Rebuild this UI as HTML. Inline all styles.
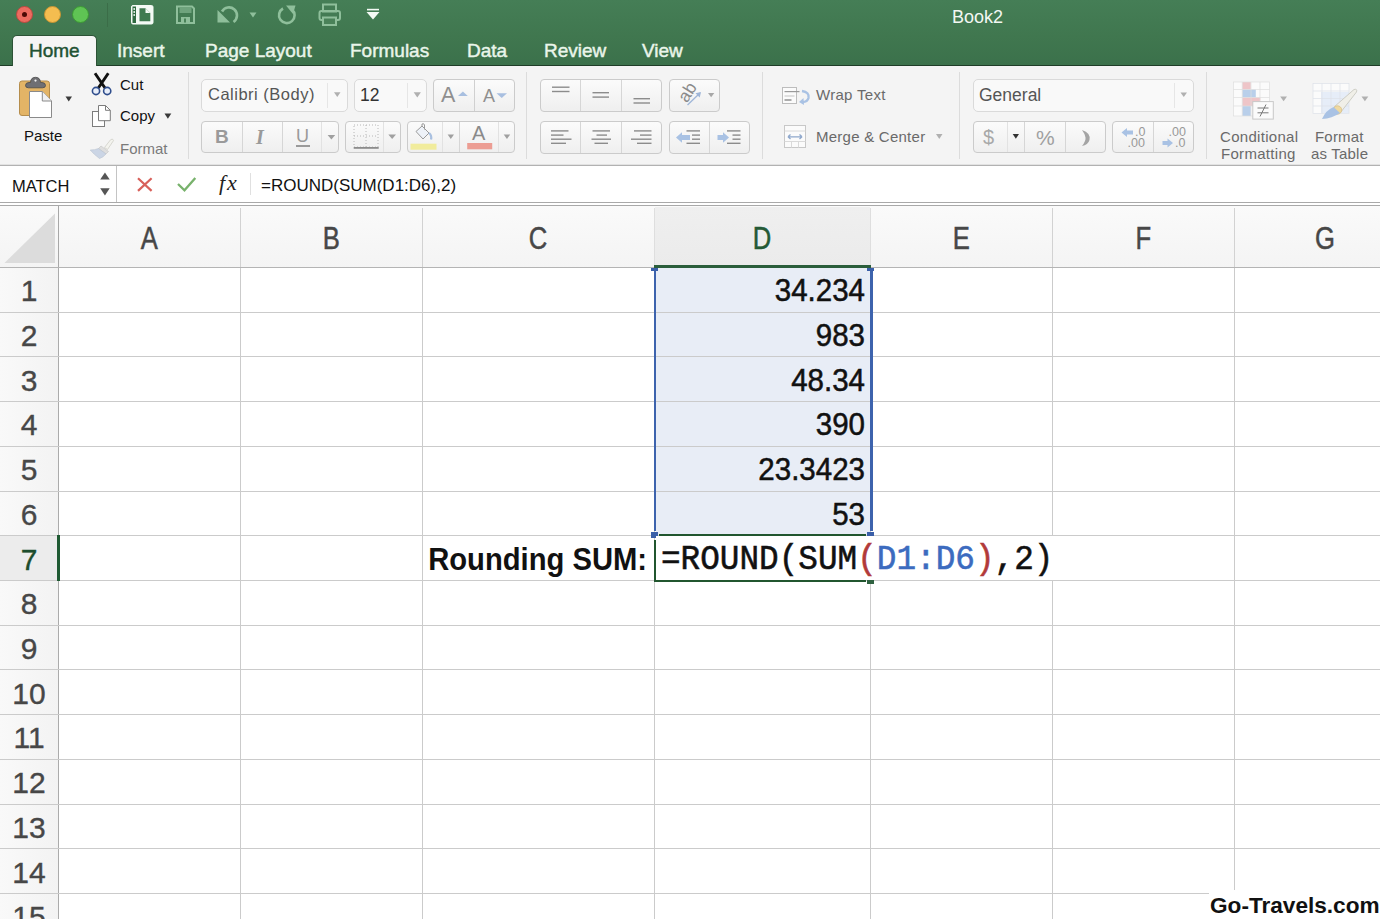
<!DOCTYPE html>
<html><head><meta charset="utf-8">
<style>
*{margin:0;padding:0;box-sizing:border-box}
html,body{width:1380px;height:919px;overflow:hidden;background:#fff;font-family:"Liberation Sans",sans-serif}
.a{position:absolute}
.t{position:absolute;white-space:nowrap;line-height:1}
#title{left:0;top:0;width:1380px;height:66px;background:linear-gradient(#457e56,#40774f 55%,#3b714b)}
#ribbon{left:0;top:66px;width:1380px;height:98px;background:#f4f4f4}
#fbar{left:0;top:164px;width:1380px;height:42px;background:#fff}
#colhdr{left:0;top:205px;width:1380px;height:62px;background:#f6f6f6}
#rowhdr{left:0;top:267px;width:58px;height:652px;background:#f6f6f6}
.hl{position:absolute;height:1px;background:#d6d6d6}
.vl{position:absolute;width:1px;background:#d6d6d6}
.tab{color:#eaf5ea;font-size:19px}
.box{position:absolute;border:1px solid #cbcbcb;border-radius:4px;background:linear-gradient(#fbfbfb,#efefef)}
.dv{position:absolute;width:1px;background:#d6d6d6}
.rt{font-size:15px;color:#111}
.gt{font-size:15px;color:#7a7a7a}
.ch{font-size:30.5px;color:#444;text-align:center;-webkit-text-stroke:0.5px currentColor}
.rn{font-size:30px;color:#444;text-align:center;width:58px;left:0;-webkit-text-stroke:0.35px currentColor}
.num{font-size:29.5px;color:#111;text-align:right;-webkit-text-stroke:0.5px currentColor;transform:scaleY(1.05);transform-origin:0 25px}
.mono{-webkit-text-stroke:0.55px currentColor;transform:scaleY(1.07);transform-origin:0 25px}
.tab{-webkit-text-stroke:0.45px currentColor}

</style></head><body>
<!-- TITLE BAR -->
<div id="title" class="a"></div>
<div class="a" style="left:0;top:65px;width:1380px;height:1px;background:#1f3d28"></div>
<!-- traffic lights -->
<div class="a" style="left:16px;top:6px;width:17px;height:17px;border-radius:50%;background:#ec6b60;border:1.2px solid #b9483f"></div>
<div class="a" style="left:22px;top:12px;width:5px;height:5px;border-radius:50%;background:#4d0a06"></div>
<div class="a" style="left:44px;top:6px;width:17px;height:17px;border-radius:50%;background:#f4bd50;border:1.2px solid #c89432"></div>
<div class="a" style="left:72px;top:6px;width:17px;height:17px;border-radius:50%;background:#5fc454;border:1.2px solid #3c9a34"></div>
<div class="a" style="left:107px;top:3px;width:1px;height:24px;background:#3b6d48"></div>
<!-- title icons -->
<svg class="a" style="left:0;top:0" width="400" height="32">
 <g>
  <rect x="131.5" y="5.5" width="21.5" height="18.5" rx="1.5" fill="#f4faf5" stroke="#f4faf5"/>
  <rect x="132.5" y="6.5" width="3.5" height="16.5" fill="#2f6b41"/>
  <circle cx="134.2" cy="9" r="0.9" fill="#f4faf5"/><circle cx="134.2" cy="12" r="0.9" fill="#f4faf5"/><circle cx="134.2" cy="15" r="0.9" fill="#f4faf5"/>
  <path d="M139.5 8.3 H145.5 L150.3 13 V21.3 H139.5 Z" fill="#3f7a50"/>
  <path d="M145.5 8.3 V13 H150.3" fill="#f4faf5"/>
 </g>
 <g fill="none" stroke="#8fbf9b" stroke-width="2">
  <path d="M177 6.5 H192 L194 8.5 V23 H177 Z"/>
  <rect x="179.5" y="7" width="12" height="6" fill="#6fa37d" stroke="none"/>
  <rect x="181" y="17" width="9" height="6" fill="#8fbf9b" stroke="none"/>
 </g>
 <rect x="184" y="18.5" width="2" height="4" fill="#4a8259"/>
 <g fill="none" stroke="#8fbf9b" stroke-width="2.6">
  <path d="M222 11.5 A8 8 0 1 1 233.5 22"/>
 </g>
 <path d="M217.5 10 L217.5 22.5 L230 22.5 Z" fill="#8fbf9b"/>
 <path d="M249.5 12.5 H256.5 L253 17.5 Z" fill="#8fbf9b"/>
 <g fill="none" stroke="#8fbf9b" stroke-width="2.6">
  <path d="M292 9.5 A7.8 7.8 0 1 1 283 8.5"/>
 </g>
 <path d="M286 5.5 L295.5 5.5 L293 14 Z" fill="#8fbf9b"/>
 <g fill="none" stroke="#8fbf9b" stroke-width="2">
  <rect x="323" y="4.5" width="13" height="7"/>
  <rect x="319.5" y="11" width="20.5" height="9" rx="2"/>
  <rect x="323" y="17.5" width="13" height="7.5" fill="#4a8259"/>
 </g>
 <rect x="367" y="8.8" width="12" height="1.6" fill="#f4faf5"/>
 <path d="M366.5 12 H379.5 L373 19.6 Z" fill="#f4faf5"/>
</svg>
<!-- Book2 -->
<div class="t" style="left:952px;top:8px;font-size:18px;color:#f2f7f2">Book2</div>
<!-- tabs -->
<div class="a" style="left:12px;top:35px;width:85px;height:31px;background:#f5f5f5;border:1px solid #2c5236;border-bottom:none;border-radius:5px 5px 0 0"></div>
<div class="t tab" style="left:29px;top:41px;color:#1f5233">Home</div>
<div class="t tab" style="left:117px;top:41px">Insert</div>
<div class="t tab" style="left:205px;top:41px">Page Layout</div>
<div class="t tab" style="left:350px;top:41px">Formulas</div>
<div class="t tab" style="left:467px;top:41px">Data</div>
<div class="t tab" style="left:544px;top:41px">Review</div>
<div class="t tab" style="left:642px;top:41px">View</div>

<!-- RIBBON -->
<div id="ribbon" class="a"></div>
<div class="a" style="left:0;top:164px;width:1380px;height:1px;background:#e2e2e2"></div><div class="a" style="left:0;top:165px;width:1380px;height:1px;background:#b2b2b2"></div>

<!-- clipboard group -->
<svg class="a" style="left:0;top:66px" width="200" height="98" viewBox="0 66 200 98">
 <rect x="19.5" y="81" width="30" height="34.5" rx="2.5" fill="#e3b466" stroke="#b58d4c" stroke-width="1"/>
 <path d="M25.5 85.5 Q25.5 82.5 29 82.5 H30.5 Q30.8 77.3 35.5 77.3 Q40.2 77.3 40.5 82.5 H42 Q45.5 82.5 45.5 85.5 Q45.5 87.8 42.5 87.8 H28.5 Q25.5 87.8 25.5 85.5 Z" fill="#6f6f73" stroke="#4a4a4a" stroke-width="0.8"/>
 <circle cx="35.5" cy="80.6" r="1.1" fill="#f4f4f4"/>
 <path d="M29.5 91.5 H42.3 L51.5 101 V117.5 H29.5 Z" fill="#fff" stroke="#8a8a8a" stroke-width="1"/>
 <path d="M42.3 91.5 V101 H51.5" fill="#f0f0f0" stroke="#8a8a8a" stroke-width="1"/>
 <path d="M65.5 96.5 H72 L68.75 101.5 Z" fill="#3a3a3a"/>
 <!-- scissors -->
 <path d="M95 73.2 L105 88 M108.3 73.2 L98.3 88" stroke="#111" stroke-width="2.9"/>
 <circle cx="96" cy="91" r="3.6" fill="#e8eef9" stroke="#2f4d8c" stroke-width="1.6"/>
 <circle cx="107.2" cy="91" r="3.6" fill="#e8eef9" stroke="#2f4d8c" stroke-width="1.6"/>
 <!-- copy -->
 <rect x="92.5" y="111.5" width="12" height="15" fill="#fff" stroke="#7c7c7c" stroke-width="1"/>
 <path d="M98.5 105.5 H105.5 L110.3 110.3 V120.7 H98.5 Z" fill="#fff" stroke="#7c7c7c" stroke-width="1"/>
 <path d="M105.5 105.5 V110.3 H110.3" fill="none" stroke="#7c7c7c" stroke-width="1"/>
 <path d="M164.5 113.5 H171.3 L167.9 118.7 Z" fill="#3a3a3a"/>
 <!-- brush -->
 <path d="M104.5 147.5 L110.5 139.8 Q112.8 137.8 113.5 140.6 L107.5 149.5 Z" fill="#f3f3ee" stroke="#cfcfc8" stroke-width="0.8"/>
 <path d="M101 146 L108.5 151.5 L106 154 L98.5 148.5 Z" fill="#dedede" stroke="#c4c4c4" stroke-width="0.6"/>
 <path d="M98.5 148.5 L106 154 Q103 157.5 99.5 158.5 Q94 154.5 90.2 150 Q95 150 98.5 148.5 Z" fill="#cbd5e5" stroke="#b9c2d0" stroke-width="0.6"/>
 <rect x="188" y="72" width="1" height="87" fill="#dcdcdc"/>
</svg>
<div class="t rt" style="left:24px;top:128px">Paste</div>
<div class="t rt" style="left:120px;top:77px">Cut</div>
<div class="t rt" style="left:120px;top:108px">Copy</div>
<div class="t gt" style="left:120px;top:141px">Format</div>
<!-- font group -->
<div class="a" style="left:201px;top:79px;width:147px;height:33px;border:1px solid #dadada;border-radius:5px;background:#f9f9f9"></div>
<div class="dv" style="left:327px;top:83px;height:25px;background:#e6e6e6"></div>
<div class="t" style="left:208px;top:86px;font-size:16.5px;letter-spacing:0.5px;color:#555">Calibri (Body)</div>
<div class="a" style="left:354px;top:79px;width:73px;height:33px;border:1px solid #dadada;border-radius:5px;background:#f9f9f9"></div>
<div class="dv" style="left:407px;top:83px;height:25px;background:#e6e6e6"></div>
<div class="t" style="left:360px;top:86.5px;font-size:17.5px;color:#333">12</div>
<div class="box" style="left:433px;top:79px;width:82px;height:33px"></div>
<div class="dv" style="left:474px;top:80px;height:31px;background:#d0d0d0"></div>
<div class="t" style="left:441px;top:85px;font-size:21.5px;color:#8f8f8f">A</div>
<div class="t" style="left:483px;top:86.5px;font-size:18px;color:#8f8f8f">A</div>
<div class="box" style="left:201px;top:121px;width:138px;height:32px"></div>
<div class="dv" style="left:242px;top:122px;height:30px"></div>
<div class="dv" style="left:282px;top:122px;height:30px"></div>
<div class="dv" style="left:321px;top:122px;height:30px;background:#e2e2e2"></div>
<div class="t" style="left:215px;top:127px;font-size:19px;font-weight:bold;color:#9a9a9a">B</div>
<div class="t" style="left:256px;top:127px;font-size:20px;font-weight:bold;font-style:italic;font-family:'Liberation Serif',serif;color:#9a9a9a">I</div>
<div class="t" style="left:296px;top:127px;font-size:18px;color:#9a9a9a">U</div>
<div class="a" style="left:296px;top:145px;width:14px;height:2px;background:#9a9a9a"></div>
<div class="box" style="left:345px;top:121px;width:56px;height:32px"></div>
<div class="dv" style="left:383px;top:122px;height:30px;background:#e2e2e2"></div>
<div class="box" style="left:407px;top:121px;width:108px;height:32px"></div>
<div class="dv" style="left:442px;top:122px;height:30px;background:#e2e2e2"></div>
<div class="dv" style="left:459px;top:122px;height:30px"></div>
<div class="dv" style="left:498px;top:122px;height:30px;background:#e2e2e2"></div>
<div class="t" style="left:472px;top:123px;font-size:20px;color:#8a8a8a">A</div>
<svg class="a" style="left:0;top:0" width="530" height="166">
 <path d="M334 92.3 H340.5 L337.25 97 Z" fill="#b0b0b0"/>
 <path d="M413.7 92.2 H420.9 L417.3 97.4 Z" fill="#b0b0b0"/>
 <path d="M458 96 L462.9 91.5 L467.8 96 Z" fill="#a8bfe0"/>
 <path d="M496.5 93.2 H507 L501.75 98 Z" fill="#a8bfe0"/>
 <path d="M327.6 135 H335.2 L331.4 139.5 Z" fill="#a0a0a0"/>
 <path d="M388.3 134.6 H396 L392.15 139.1 Z" fill="#a0a0a0"/>
 <path d="M447.6 134.6 H454 L450.8 139 Z" fill="#a0a0a0"/>
 <path d="M503.7 134.6 H510.2 L506.95 139 Z" fill="#a0a0a0"/>
 <g stroke="#b8b8b8" stroke-width="1" stroke-dasharray="1 2" fill="none">
  <rect x="354" y="125" width="24" height="22"/>
  <path d="M366 125 V147 M354 136 H378"/>
 </g>
 <rect x="353.7" y="147" width="25" height="1.8" fill="#8c8c8c"/>
 <rect x="410.5" y="143.7" width="26" height="6" fill="#f1ec9c"/>
 <rect x="467.2" y="143" width="25" height="6.3" fill="#ec9d93"/>
 <g transform="translate(415 123.5)">
  <path d="M1 8 L7 2.5 L14 9.5 L8 15.5 Z" fill="#eef2f8" stroke="#9a9a9a" stroke-width="1"/>
  <path d="M7 2.5 V0.5 Q9 -0.5 9.5 1.5 V6" fill="none" stroke="#9a9a9a" stroke-width="1"/>
  <path d="M14 9.5 Q17 12 16 16" fill="none" stroke="#a9c0e0" stroke-width="2.2"/>
 </g>
 <rect x="526" y="72" width="1" height="87" fill="#dcdcdc"/>
</svg>
<!-- alignment group -->
<div class="box" style="left:540px;top:79px;width:122px;height:33px"></div>
<div class="dv" style="left:580px;top:80px;height:31px"></div>
<div class="dv" style="left:621px;top:80px;height:31px"></div>
<div class="box" style="left:669px;top:79px;width:51px;height:33px"></div>
<div class="box" style="left:540px;top:121px;width:122px;height:33px"></div>
<div class="dv" style="left:580px;top:122px;height:31px"></div>
<div class="dv" style="left:621px;top:122px;height:31px"></div>
<div class="box" style="left:669px;top:121px;width:81px;height:33px"></div>
<div class="dv" style="left:709px;top:122px;height:31px"></div>
<svg class="a" style="left:0;top:0" width="1380" height="166">
 <g fill="#8c8c8c">
  <rect x="552" y="86.5" width="17.5" height="1.4"/><rect x="552" y="90.8" width="17.5" height="1.4"/>
  <rect x="592.5" y="92" width="16.5" height="1.4"/><rect x="592.5" y="96.4" width="16.5" height="1.4"/>
  <rect x="633.5" y="98" width="16.5" height="1.4"/><rect x="633.5" y="102.3" width="16.5" height="1.4"/>
  <rect x="551" y="130.2" width="17.5" height="1.4"/><rect x="551" y="134.4" width="12.5" height="1.4"/><rect x="551" y="138.5" width="20.5" height="1.4"/><rect x="551" y="142.6" width="15" height="1.4"/>
  <rect x="592.5" y="130.2" width="17.5" height="1.4"/><rect x="596.5" y="134.4" width="10.5" height="1.4"/><rect x="591.5" y="138.5" width="19.5" height="1.4"/><rect x="594.5" y="142.6" width="13.5" height="1.4"/>
  <rect x="634" y="130.2" width="17.5" height="1.4"/><rect x="640" y="134.4" width="11.5" height="1.4"/><rect x="631" y="138.5" width="20.5" height="1.4"/><rect x="637" y="142.6" width="14.5" height="1.4"/>
  <rect x="686.5" y="130.2" width="13.5" height="1.4"/><rect x="692" y="134.4" width="8" height="1.4"/><rect x="692" y="138.5" width="8" height="1.4"/><rect x="686.5" y="142.6" width="13.5" height="1.4"/>
  <rect x="727" y="130.2" width="13.5" height="1.4"/><rect x="732.5" y="134.4" width="8" height="1.4"/><rect x="732.5" y="138.5" width="8" height="1.4"/><rect x="727" y="142.6" width="13.5" height="1.4"/>
 </g>
 <path d="M676 137.5 L682 132.3 V135 H690 V140 H682 V142.7 Z" fill="#a9c2e4"/>
 <path d="M729 137.5 L723 132.3 V135 H717.5 V140 H723 V142.7 Z" fill="#a9c2e4"/>
 <text x="0" y="0" transform="translate(687 103.5) rotate(-58)" font-family="Liberation Sans" font-size="17.5" fill="#8a8a8a">ab</text>
 <path d="M687.5 105 L700 93" stroke="#9fb6d8" stroke-width="1.3"/>
 <path d="M701 92 L695.5 93.3 L699.7 97.5 Z" fill="#9fb6d8"/>
 <path d="M708 92.9 H714.3 L711.15 97.3 Z" fill="#a8a8a8"/>
 <rect x="762" y="72" width="1" height="87" fill="#dcdcdc"/>
 <!-- wrap text icon -->
 <rect x="782.5" y="87.5" width="14" height="16" fill="#fbfbfb" stroke="#bdbdbd" stroke-width="1"/>
 <rect x="784.5" y="91" width="15" height="1.2" fill="#9a9a9a"/>
 <rect x="784.5" y="95.5" width="10" height="1" fill="#c4c4c4"/>
 <rect x="784.5" y="99.3" width="7" height="1.4" fill="#8a8a8a"/>
 <path d="M802 91 Q809.5 92 808.5 98 Q807.5 102 802.5 102" fill="none" stroke="#a9c2e4" stroke-width="2.4"/>
 <path d="M799 102 L803.5 98 L804 105 Z" fill="#a9c2e4"/>
 <!-- merge icon -->
 <rect x="784.5" y="125.5" width="21" height="22" fill="#fbfbfb" stroke="#c8c8c8" stroke-width="1"/>
 <path d="M784.5 141.5 H805.5 M791.5 141.5 V147.5 M798.5 141.5 V147.5 M784.5 131 H805.5" stroke="#dadada" stroke-width="1"/>
 <path d="M788 136.8 H802 M788 136.8 L790.5 134.5 M788 136.8 L790.5 139.1 M802 136.8 L799.5 134.5 M802 136.8 L799.5 139.1" stroke="#8fa8cc" stroke-width="1.3" fill="none"/>
 <path d="M936 134 H942.5 L939.25 139 Z" fill="#b0b0b0"/>
 <rect x="959" y="72" width="1" height="87" fill="#dcdcdc"/>
</svg>
<div class="t" style="left:816px;top:87px;font-size:15px;letter-spacing:0.3px;color:#6a6a6a">Wrap Text</div>
<div class="t" style="left:816px;top:129px;font-size:15px;letter-spacing:0.25px;color:#6a6a6a">Merge &amp; Center</div>
<!-- number group -->
<div class="a" style="left:973px;top:79px;width:221px;height:33px;border:1px solid #dadada;border-radius:5px;background:#f9f9f9"></div>
<div class="dv" style="left:1174px;top:83px;height:25px;background:#e6e6e6"></div>
<div class="t" style="left:979px;top:87px;font-size:17.5px;color:#555">General</div>
<div class="box" style="left:973px;top:121px;width:133px;height:32px"></div>
<div class="dv" style="left:1007px;top:122px;height:30px;background:#e2e2e2"></div>
<div class="dv" style="left:1024px;top:122px;height:30px"></div>
<div class="dv" style="left:1065px;top:122px;height:30px"></div>
<div class="box" style="left:1112px;top:121px;width:82px;height:32px"></div>
<div class="dv" style="left:1153px;top:122px;height:30px"></div>
<div class="t" style="left:983px;top:127px;font-size:20px;color:#a8a8a8">$</div>
<div class="t" style="left:1036px;top:127px;font-size:21px;color:#a0a0a0">%</div>
<div class="t" style="left:1135px;top:126.3px;font-size:12.5px;color:#999">.0</div>
<div class="t" style="left:1127.5px;top:137.3px;font-size:12.5px;color:#999">.00</div>
<div class="t" style="left:1168.5px;top:126.3px;font-size:12.5px;color:#999">.00</div>
<div class="t" style="left:1175px;top:137.3px;font-size:12.5px;color:#999">.0</div>
<div class="t" style="left:1220px;top:129px;font-size:15px;letter-spacing:0.3px;color:#6a6a6a">Conditional</div>
<div class="t" style="left:1221px;top:146px;font-size:15px;letter-spacing:0.3px;color:#6a6a6a">Formatting</div>
<div class="t" style="left:1315px;top:129px;font-size:15px;letter-spacing:0.2px;color:#6a6a6a">Format</div>
<div class="t" style="left:1311px;top:146px;font-size:15px;letter-spacing:0.2px;color:#6a6a6a">as Table</div>
<svg class="a" style="left:0;top:0" width="1380" height="166">
 <path d="M1180.5 92.5 H1187 L1183.75 97 Z" fill="#b0b0b0"/>
 <path d="M1012.7 134 H1019 L1015.85 138.8 Z" fill="#333"/>
 <path d="M1082 130 Q1091 133 1089.5 140 Q1088 145 1082 146 Q1086 141 1085.5 137.5 Q1085 134 1082 130 Z" fill="#a4a4a4"/>
 <path d="M1121.5 132.5 L1127 128 V130.5 H1133 V134.5 H1127 V137 Z" fill="#a9c2e4"/>
 <path d="M1173 143 L1167.5 138.5 V141 H1162.5 V145 H1167.5 V147.5 Z" fill="#a9c2e4"/>
 <rect x="1206" y="72" width="1" height="87" fill="#dcdcdc"/>
 <!-- CF icon -->
 <g>
  <rect x="1233.5" y="82" width="36" height="34" fill="#fbfbfb"/>
  <rect x="1242.3" y="82" width="8.5" height="7.5" fill="#eec5c8"/>
  <rect x="1242.3" y="89.5" width="13.5" height="8" fill="#b9cfea"/>
  <rect x="1242.3" y="97.5" width="18" height="8.5" fill="#eec5c8"/>
  <rect x="1242.3" y="106" width="8.5" height="10" fill="#b9cfea"/>
  <g stroke="#dedede" stroke-width="0.7" fill="none">
   <rect x="1233.5" y="82" width="36" height="34"/>
   <path d="M1242.3 82 V116 M1251 82 V116 M1260 82 V116 M1233.5 89.5 H1269.5 M1233.5 97.5 H1269.5 M1233.5 106 H1269.5"/>
  </g>
  <rect x="1252.8" y="101.6" width="20.5" height="17.5" fill="#fbfbfb" stroke="#c8c8c8" stroke-width="1"/>
  <path d="M1257.5 108 H1268.5 M1257.5 112.8 H1268.5 M1266 104.5 L1260 116.5" stroke="#7a7a7a" stroke-width="1"/>
 </g>
 <path d="M1280.2 96.4 H1287 L1283.6 101.3 Z" fill="#b0b0b0"/>
 <!-- FaT icon -->
 <g>
  <rect x="1313" y="83.5" width="36" height="30" fill="#fbfbfb"/>
  <rect x="1321" y="92" width="28" height="21" fill="#e6edf8"/>
  <g stroke="#dde1e8" stroke-width="0.7" fill="none">
   <rect x="1313" y="83.5" width="36" height="30"/>
   <path d="M1322 83.5 V113.5 M1331 83.5 V113.5 M1340 83.5 V113.5 M1313 91 H1349 M1313 98.5 H1349 M1313 106 H1349"/>
  </g>
  <path d="M1334 107 L1354 89.5 Q1357.5 88.5 1356.5 92 L1340.5 112.5 Z" fill="#f0efe8" stroke="#c8c8c0" stroke-width="0.9"/>
  <circle cx="1337.5" cy="110" r="4.2" fill="#efd9a0" stroke="#d9c088" stroke-width="0.8"/>
  <path d="M1333.5 107 Q1326 110 1322 119 Q1332 118.5 1340 113 Z" fill="#a9c2e4"/>
 </g>
 <path d="M1361.5 96.6 H1368.3 L1364.9 101.3 Z" fill="#b0b0b0"/>
</svg>
<!-- FORMULA BAR -->
<div class="a" style="left:0;top:166px;width:1380px;height:36px;background:#fff"></div>
<div class="a" style="left:0;top:202px;width:1380px;height:1px;background:#a9a9a9"></div>
<div class="a" style="left:116px;top:166px;width:1px;height:36px;background:#c4c4c4"></div>
<div class="t" style="left:12px;top:178px;font-size:16.5px;color:#111">MATCH</div>
<svg class="a" style="left:0;top:0" width="260" height="205">
 <path d="M100.2 179.5 L104.95 172.5 L109.7 179.5 Z" fill="#555"/>
 <path d="M100.2 188.2 H109.7 L104.95 195.4 Z" fill="#555"/>
 <path d="M138 178.2 L151.6 190.9 M151.6 178.2 L138 190.9" stroke="#d8605a" stroke-width="2.2"/>
 <path d="M178 184 L184.5 190.3 L195.3 178" fill="none" stroke="#78b26c" stroke-width="2.3"/>
</svg>
<div class="t" style="left:219px;top:172px;font-size:22px;letter-spacing:2px;font-style:italic;font-family:'Liberation Serif',serif;color:#222">fx</div>
<div class="a" style="left:250px;top:173px;width:1px;height:22px;background:#e0e0e0"></div>
<div class="t" style="left:261px;top:177px;font-size:17px;color:#111">=ROUND(SUM(D1:D6),2)</div>

<!-- COLUMN HEADER -->
<div class="a" style="left:0;top:206px;width:1380px;height:61px;background:linear-gradient(#fafafa,#f4f4f4)"></div>
<div class="a" style="left:0;top:205px;width:1380px;height:1px;background:#a9a9a9"></div>
<div class="a" style="left:0;top:267px;width:58px;height:652px;background:linear-gradient(90deg,#f9f9f9,#f3f3f3)"></div>
<div class="a" style="left:655px;top:207px;width:215px;height:58px;background:linear-gradient(#efefef,#ebebeb)"></div>
<div class="a" style="left:0;top:536px;width:57px;height:44px;background:#ececec"></div>
<div class="a" style="left:656px;top:268px;width:214px;height:267px;background:#e8edf6"></div>
<svg class="a" style="left:0;top:205px" width="58" height="62"><path d="M4.5 58 L55 8.5 V58 Z" fill="#dcdcdc"/></svg>
<!-- GRID -->
<div class="vl" style="left:58px;top:206px;height:61px;background:#a8a8a8"></div>
<div class="vl" style="left:58px;top:267px;height:652px;background:#ababab"></div>
<div class="vl" style="left:240px;top:208px;height:59px;background:#d2d2d2"></div>
<div class="vl" style="left:240px;top:267px;height:652px;background:#cbcbcb"></div>
<div class="vl" style="left:422px;top:208px;height:59px;background:#d2d2d2"></div>
<div class="vl" style="left:422px;top:267px;height:652px;background:#cbcbcb"></div>
<div class="vl" style="left:654px;top:208px;height:59px;background:#dedede"></div>
<div class="vl" style="left:654px;top:267px;height:652px;background:#cbcbcb"></div>
<div class="vl" style="left:870px;top:208px;height:59px;background:#dedede"></div>
<div class="vl" style="left:870px;top:267px;height:652px;background:#cbcbcb"></div>
<div class="vl" style="left:1052px;top:208px;height:59px;background:#d2d2d2"></div>
<div class="vl" style="left:1052px;top:267px;height:652px;background:#cbcbcb"></div>
<div class="vl" style="left:1234px;top:208px;height:59px;background:#d2d2d2"></div>
<div class="vl" style="left:1234px;top:267px;height:652px;background:#cbcbcb"></div>
<div class="hl" style="left:0;top:267px;width:1380px;background:#b4b4b4"></div>
<div class="hl" style="left:0;top:312px;width:1380px;background:#cbcbcb"></div>
<div class="hl" style="left:0;top:356px;width:1380px;background:#cbcbcb"></div>
<div class="hl" style="left:0;top:401px;width:1380px;background:#cbcbcb"></div>
<div class="hl" style="left:0;top:446px;width:1380px;background:#cbcbcb"></div>
<div class="hl" style="left:0;top:491px;width:1380px;background:#cbcbcb"></div>
<div class="hl" style="left:0;top:535px;width:1380px;background:#cbcbcb"></div>
<div class="hl" style="left:0;top:580px;width:1380px;background:#cbcbcb"></div>
<div class="hl" style="left:0;top:625px;width:1380px;background:#cbcbcb"></div>
<div class="hl" style="left:0;top:669px;width:1380px;background:#cbcbcb"></div>
<div class="hl" style="left:0;top:714px;width:1380px;background:#cbcbcb"></div>
<div class="hl" style="left:0;top:759px;width:1380px;background:#cbcbcb"></div>
<div class="hl" style="left:0;top:804px;width:1380px;background:#cbcbcb"></div>
<div class="hl" style="left:0;top:848px;width:1380px;background:#cbcbcb"></div>
<div class="hl" style="left:0;top:893px;width:1380px;background:#cbcbcb"></div>
<div class="t ch" style="left:58px;width:182px;top:223px;color:#474747"><span style="display:inline-block;transform:scaleX(0.84)">A</span></div>
<div class="t ch" style="left:240px;width:182px;top:223px;color:#474747"><span style="display:inline-block;transform:scaleX(0.84)">B</span></div>
<div class="t ch" style="left:422px;width:232px;top:223px;color:#474747"><span style="display:inline-block;transform:scaleX(0.84)">C</span></div>
<div class="t ch" style="left:654px;width:216px;top:223px;color:#245a36"><span style="display:inline-block;transform:scaleX(0.84)">D</span></div>
<div class="t ch" style="left:870px;width:182px;top:223px;color:#474747"><span style="display:inline-block;transform:scaleX(0.84)">E</span></div>
<div class="t ch" style="left:1052px;width:182px;top:223px;color:#474747"><span style="display:inline-block;transform:scaleX(0.84)">F</span></div>
<div class="t ch" style="left:1234px;width:182px;top:223px;color:#474747"><span style="display:inline-block;transform:scaleX(0.84)">G</span></div>
<div class="t rn" style="top:276.3px;color:#474747">1</div>
<div class="t rn" style="top:321.0px;color:#474747">2</div>
<div class="t rn" style="top:365.7px;color:#474747">3</div>
<div class="t rn" style="top:410.4px;color:#474747">4</div>
<div class="t rn" style="top:455.1px;color:#474747">5</div>
<div class="t rn" style="top:499.9px;color:#474747">6</div>
<div class="t rn" style="top:544.6px;color:#1d4d2d">7</div>
<div class="t rn" style="top:589.3px;color:#474747">8</div>
<div class="t rn" style="top:634.0px;color:#474747">9</div>
<div class="t rn" style="top:678.7px;color:#474747">10</div>
<div class="t rn" style="top:723.4px;color:#474747">11</div>
<div class="t rn" style="top:768.1px;color:#474747">12</div>
<div class="t rn" style="top:812.8px;color:#474747">13</div>
<div class="t rn" style="top:857.5px;color:#474747">14</div>
<div class="t rn" style="top:902.2px;color:#474747">15</div>

<!-- selection & content -->
<div class="a" style="left:654px;top:265px;width:217px;height:3px;background:#2b5e3b"></div>
<div class="a" style="left:57px;top:535px;width:3px;height:46px;background:#1f5a33"></div>
<div class="a" style="left:654px;top:270px;width:2px;height:261px;background:#3d63ad"></div>
<div class="a" style="left:870px;top:270px;width:3px;height:261px;background:#3d63ad"></div>
<div class="a" style="left:651px;top:268px;width:7px;height:3px;background:#3a5fa8"></div>
<div class="a" style="left:867px;top:268px;width:7px;height:3px;background:#3a5fa8"></div>
<div class="a" style="left:651px;top:532px;width:7px;height:6px;background:#3a5fa8"></div>
<div class="a" style="left:867px;top:532px;width:7px;height:4px;background:#3a5fa8"></div>
<div class="a" style="left:656px;top:536px;width:400px;height:44px;background:#fff"></div>
<div class="a" style="left:659px;top:534px;width:207px;height:2px;background:#21562f"></div>
<div class="a" style="left:654px;top:540px;width:2px;height:42px;background:#21562f"></div>
<div class="a" style="left:654px;top:580px;width:212px;height:2px;background:#21562f"></div>
<div class="a" style="left:867px;top:580px;width:7px;height:4px;background:#2f6140"></div>
<div class="t num" style="right:515px;top:276.2px">34.234</div>
<div class="t num" style="right:515px;top:320.9px">983</div>
<div class="t num" style="right:515px;top:365.6px">48.34</div>
<div class="t num" style="right:515px;top:410.4px">390</div>
<div class="t num" style="right:515px;top:455.1px">23.3423</div>
<div class="t num" style="right:515px;top:499.8px">53</div>
<div class="t" style="right:733px;top:546px;font-size:29.2px;font-weight:bold;color:#111;transform:scaleY(1.09);transform-origin:0 24px">Rounding SUM:</div>
<div class="t mono" style="left:661px;top:545px;font-size:32.7px;font-family:'Liberation Mono',monospace;color:#111">=ROUND(SUM<span style="color:#b23a3a">(</span><span style="color:#3c6bbf">D1:D6</span><span style="color:#b23a3a">)</span>,2)</div>
<div class="a" style="left:1209px;top:890px;width:171px;height:29px;background:#fff"></div>
<div class="t" style="left:1210px;top:894.5px;font-size:22.6px;font-weight:bold;color:#111">Go-Travels.com</div>
</body></html>
